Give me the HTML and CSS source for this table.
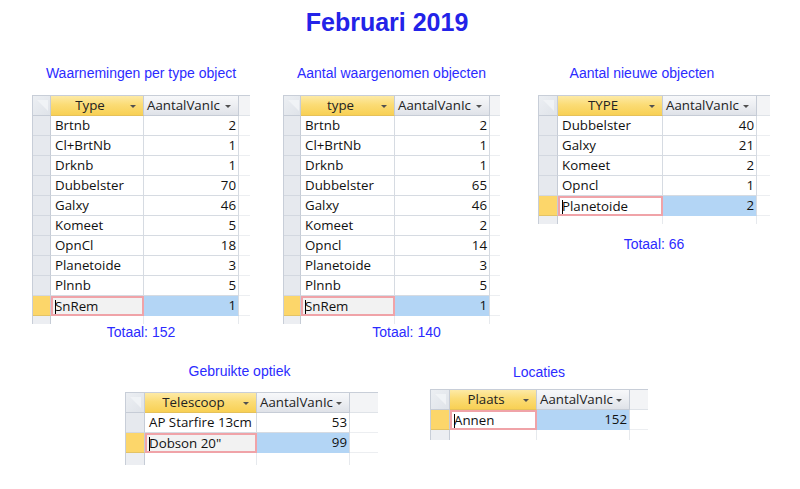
FILE: index.html
```html
<!DOCTYPE html>
<html>
<head>
<meta charset="utf-8">
<link rel="stylesheet" href="styles.css">
</head>
<body>
<div class="page">
  <h1 class="title">Februari 2019</h1>

  <div class="row row-top">
    <section class="block b1">
      <div class="label">Waarnemingen per type object</div>
      <div class="grid g1">
        <div class="corner"></div><div class="hd key">Type<span class="arr"></span></div><div class="hd val">AantalVanIc<span class="arr"></span></div><div class="hx"></div>
        <div class="sel"></div><div class="c">Brtnb</div><div class="c n">2</div><div class="x"></div>
        <div class="sel"></div><div class="c">Cl+BrtNb</div><div class="c n">1</div><div class="x"></div>
        <div class="sel"></div><div class="c">Drknb</div><div class="c n">1</div><div class="x"></div>
        <div class="sel"></div><div class="c">Dubbelster</div><div class="c n">70</div><div class="x"></div>
        <div class="sel"></div><div class="c">Galxy</div><div class="c n">46</div><div class="x"></div>
        <div class="sel"></div><div class="c">Komeet</div><div class="c n">5</div><div class="x"></div>
        <div class="sel"></div><div class="c">OpnCl</div><div class="c n">18</div><div class="x"></div>
        <div class="sel"></div><div class="c">Planetoide</div><div class="c n">3</div><div class="x"></div>
        <div class="sel"></div><div class="c">Plnnb</div><div class="c n">5</div><div class="x"></div>
        <div class="sel on"></div><div class="c act grey"><span class="cur"></span>SnRem</div><div class="c n hi">1</div><div class="x"></div>
        <div class="sel f"></div><div class="c f"></div><div class="c f"></div><div class="x f"></div>
      </div>
      <div class="total">Totaal: 152</div>
    </section>

    <section class="block b2">
      <div class="label">Aantal waargenomen objecten</div>
      <div class="grid g2">
        <div class="corner"></div><div class="hd key">type<span class="arr"></span></div><div class="hd val">AantalVanIc<span class="arr"></span></div><div class="hx"></div>
        <div class="sel"></div><div class="c">Brtnb</div><div class="c n">2</div><div class="x"></div>
        <div class="sel"></div><div class="c">Cl+BrtNb</div><div class="c n">1</div><div class="x"></div>
        <div class="sel"></div><div class="c">Drknb</div><div class="c n">1</div><div class="x"></div>
        <div class="sel"></div><div class="c">Dubbelster</div><div class="c n">65</div><div class="x"></div>
        <div class="sel"></div><div class="c">Galxy</div><div class="c n">46</div><div class="x"></div>
        <div class="sel"></div><div class="c">Komeet</div><div class="c n">2</div><div class="x"></div>
        <div class="sel"></div><div class="c">Opncl</div><div class="c n">14</div><div class="x"></div>
        <div class="sel"></div><div class="c">Planetoide</div><div class="c n">3</div><div class="x"></div>
        <div class="sel"></div><div class="c">Plnnb</div><div class="c n">5</div><div class="x"></div>
        <div class="sel on"></div><div class="c act grey"><span class="cur"></span>SnRem</div><div class="c n hi">1</div><div class="x"></div>
        <div class="sel f"></div><div class="c f"></div><div class="c f"></div><div class="x f"></div>
      </div>
      <div class="total t2">Totaal: 140</div>
    </section>

    <section class="block b3">
      <div class="label l3">Aantal nieuwe objecten</div>
      <div class="grid g3">
        <div class="corner"></div><div class="hd key">TYPE<span class="arr"></span></div><div class="hd val">AantalVanIc<span class="arr"></span></div><div class="hx"></div>
        <div class="sel"></div><div class="c">Dubbelster</div><div class="c n">40</div><div class="x"></div>
        <div class="sel"></div><div class="c">Galxy</div><div class="c n">21</div><div class="x"></div>
        <div class="sel"></div><div class="c">Komeet</div><div class="c n">2</div><div class="x"></div>
        <div class="sel"></div><div class="c">Opncl</div><div class="c n">1</div><div class="x"></div>
        <div class="sel on"></div><div class="c act"><span class="cur"></span>Planetoide</div><div class="c n hi">2</div><div class="x"></div>
        <div class="sel f"></div><div class="c f"></div><div class="c f"></div><div class="x f"></div>
      </div>
      <div class="total t3">Totaal: 66</div>
    </section>
  </div>

  <div class="row row-bottom">
    <section class="block b4">
      <div class="label l4">Gebruikte optiek</div>
      <div class="grid g4">
        <div class="corner"></div><div class="hd key">Telescoop<span class="arr"></span></div><div class="hd val">AantalVanIc<span class="arr"></span></div><div class="hx"></div>
        <div class="sel"></div><div class="c">AP Starfire 13cm</div><div class="c n">53</div><div class="x"></div>
        <div class="sel on"></div><div class="c act grey"><span class="cur"></span>Dobson 20"</div><div class="c n hi">99</div><div class="x"></div>
        <div class="sel f f4"></div><div class="c f f4"></div><div class="c f f4"></div><div class="x f f4"></div>
      </div>
    </section>

    <section class="block b5">
      <div class="label">Locaties</div>
      <div class="grid g5">
        <div class="corner"></div><div class="hd key">Plaats<span class="arr"></span></div><div class="hd val">AantalVanIc<span class="arr"></span></div><div class="hx"></div>
        <div class="sel on"></div><div class="c act"><span class="cur"></span>Annen</div><div class="c n hi">152</div><div class="x"></div>
        <div class="sel f f5"></div><div class="c f f5"></div><div class="c f f5"></div><div class="x f f5"></div>
      </div>
    </section>
  </div>
</div>
</body>
</html>
```

FILE: styles.css
```css
html, body {
  margin: 0;
  padding: 0;
  background: #ffffff;
}

.page {
  width: 800px;
  height: 489px;
  position: relative;
  overflow: hidden;
}

.title {
  margin: 0;
  padding-top: 8px;
  padding-left: 0;
  width: 774px;
  text-align: center;
  font-family: "Liberation Sans", Arial, sans-serif;
  font-weight: bold;
  font-size: 25px;
  line-height: 28px;
  color: #2323e8;
}

.row {
  display: flex;
  align-items: flex-start;
}

.row-top {
  margin-top: 29px;
}

.row-bottom {
  margin-top: 23px;
}

.block {
  display: flex;
  flex-direction: column;
  align-items: stretch;
}

.label, .total {
  font-family: "Liberation Sans", Arial, sans-serif;
  font-size: 14px;
  line-height: 16px;
  color: #2b2bff;
  text-align: center;
}

.label {
  margin-bottom: 14px;
}

.total {
  margin-top: 0;
}

.b1 { margin-left: 32px; }
.b2 { margin-left: 33px; }
.b3 { margin-left: 38px; }
.b4 { margin-left: 125px; }
.b5 { margin-left: 52px; margin-top: 1px; }

.b4 .label { margin-bottom: 13px; }
.b5 .label { margin-bottom: 9px; }

.l3 { padding-right: 24px; }
.l4 { padding-right: 24px; }
.t2 { padding-left: 30px; }
.t3 { margin-top: 12px; }

.grid {
  display: grid;
  border-top: 1px solid #c8ced8;
  border-left: 1px solid #c8ced8;
  font-family: "Open Sans", "Noto Sans", sans-serif;
  font-size: 13.3px;
  color: #111111;
}

.g1 { grid-template-columns: 18px 93px 95px 11px; }
.g2 { grid-template-columns: 17px 94px 95px 10px; }
.g3 { grid-template-columns: 19px 105px 94px 13px; }
.g4 { grid-template-columns: 19px 112px 93px 28px; }
.g5 { grid-template-columns: 19px 87px 93px 18px; }

.grid > div {
  box-sizing: border-box;
  height: 20px;
  line-height: 19px;
  white-space: nowrap;
  overflow: hidden;
  position: relative;
}

.corner {
  background: linear-gradient(135deg, #eceff3 0%, #dfe3e9 100%);
  border-right: 1px solid #c6ccd6;
  border-bottom: 1px solid #c6ccd6;
}

.corner::after {
  content: "";
  position: absolute;
  left: 4px;
  top: 4px;
  width: 0;
  height: 0;
  border-bottom: 11px solid #f3f5f8;
  border-left: 11px solid transparent;
  transform: rotate(-90deg);
  opacity: 0.8;
}

.hd {
  border-right: 1px solid #c6ccd6;
  border-bottom: 1px solid #c6ccd6;
  padding-right: 14px;
  text-align: center;
  color: #222;
}

.hd.key {
  background: linear-gradient(#fdeaa6 0%, #fbdc76 45%, #f8d054 100%);
  border-bottom-color: #e5c15a;
}

.hd.val {
  background: linear-gradient(#f7f8fa 0%, #eceef2 50%, #dfe2e8 100%);
  padding-left: 3px;
  padding-right: 0;
  text-align: left;
}

.arr {
  position: absolute;
  right: 7px;
  top: 9px;
  width: 0;
  height: 0;
  border-left: 3px solid transparent;
  border-right: 3px solid transparent;
  border-top: 3px solid #505050;
}

.hx {
  background: #f3f4f6;
  border-bottom: 1px solid #dfe3e8;
}

.sel {
  background: #e6e9ee;
  border-right: 1px solid #c6ccd6;
  border-bottom: 1px solid #d3d8e0;
}

.sel.on {
  background: #fcd66a;
  border-bottom-color: #e3c366;
}

.c {
  background: #ffffff;
  border-right: 1px solid #d6dbe2;
  border-bottom: 1px solid #d6dbe2;
  padding-left: 4px;
}

.c.n {
  text-align: right;
  padding-left: 0;
  padding-right: 2px;
}

.c.hi {
  background: #b3d5f5;
  border-bottom-color: #b3d5f5;
}

.c.act {
  border: 2px solid #f0a3a8;
  padding-left: 2px;
  line-height: 17px;
}

.c.act.grey {
  background: #f2f2f2;
}

.cur {
  display: inline-block;
  width: 1px;
  height: 14px;
  background: #000;
  vertical-align: -3px;
  margin-right: -1px;
}

.x {
  border-bottom: 1px solid #eceef1;
}

.grid > div.f {
  height: 8px;
  border-bottom: none;
}

.grid > div.f4 { height: 12px; }
.grid > div.f5 { height: 10px; }

.x.f { border-right: none; }
.c.f { background: #fff; border-right-color: #e6e9ed; }
.sel.f { background: #eceef2; }
```
